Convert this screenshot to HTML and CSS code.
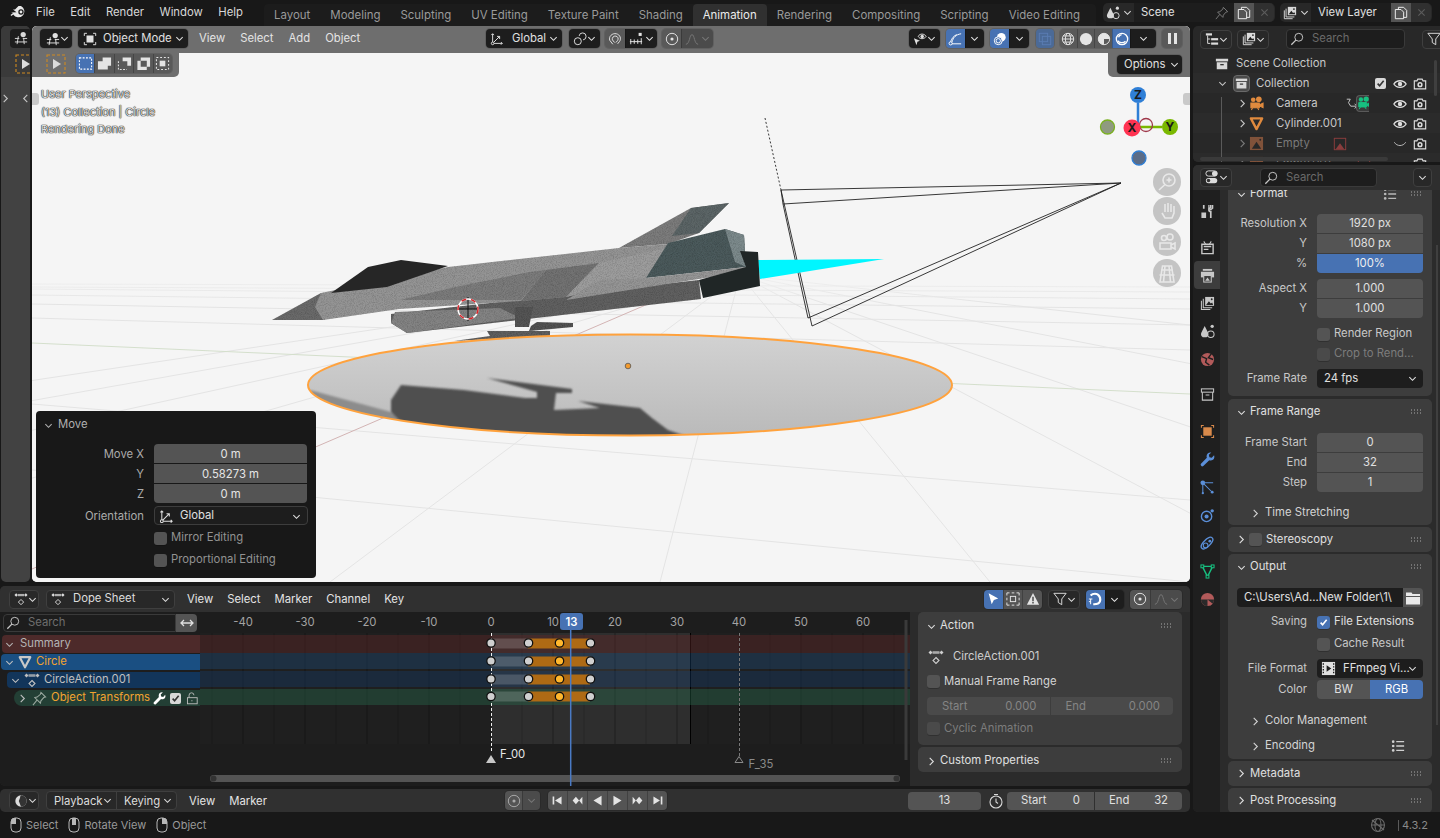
FILE: index.html
```html
<!DOCTYPE html>
<html lang="en">

<head>
  <meta charset="UTF-8" />
  <title>Blender 4.3.2</title>
  <link rel="stylesheet" href="styles.css">
</head>

<body>
  <!-- icon set -->
  <svg class="defs">
    <symbol id="i-logo" viewBox="0 0 18 16"><path d="M1 8.500l5.500-.2L3 5.500h2l3.500-3.500h2.500a6 6 0 1 1-7.800 8.500L1.500 12 .5 11 3 9z" fill="currentColor" stroke="none"/><circle cx="11" cy="8" r="2.700" fill="#181818" stroke="none"/><circle cx="11" cy="8" r="1.400" fill="currentColor" stroke="none"/></symbol>
    <symbol id="i-view3d" viewBox="0 0 16 16"><circle cx="10.500" cy="4" r="3" fill="currentColor" stroke="none"/><path d="M1 8.500h5M10 8.500h5M1 12.500h14M5 6l-1.500 9M11 8l.7 7"/></symbol>
    <symbol id="i-obj" viewBox="0 0 16 16"><path d="M1.500 4.500v-3h3M11.500 1.500h3v3M14.500 11.500v3h-3M4.500 14.500h-3v-3"/><rect x="4" y="4" width="8" height="8" fill="currentColor" stroke="none"/></symbol>
    <symbol id="i-down" viewBox="0 0 10 10"><path d="M1.500 3.500L5 7l3.500-3.500"/></symbol>
    <symbol id="i-right" viewBox="0 0 10 10"><path d="M3 1l4 4-4 4"/></symbol>
    <symbol id="i-orient" viewBox="0 0 16 16"><path d="M3 13V2M1.500 3.500L3 2l1.500 1.500M3 13h11M12.500 11.500L14 13l-1.500 1.500M3 13l8-8M8 5h3v3"/><circle cx="3" cy="13" r="1.500" fill="#1d1d1d"/></symbol>
    <symbol id="i-pivot" viewBox="0 0 16 16"><circle cx="5.500" cy="10.500" r="4"/><path d="M7 4.500A4 4 0 1 1 11.500 9"/></symbol>
    <symbol id="i-magnet" viewBox="0 0 16 16"><path d="M5.500 14L2 9.500C.5 5 5 1 9.500 2 14 3 15.500 8 13 11l-2 2.500M7.500 12L5 9c-.8-2.500 1.500-4.800 4-4.300 2.500.5 3.300 3 2 5l-2 2.300"/></symbol>
    <symbol id="i-inc" viewBox="0 0 16 16"><rect x="11" y="1" width="3.500" height="3.500" fill="currentColor" stroke="none"/><path d="M1 11h14M2 8v6M6 8.500v5M10 8.500v5M14 7v7"/></symbol>
    <symbol id="i-prop" viewBox="0 0 16 16"><circle cx="8" cy="8" r="6.500"/><circle cx="8" cy="8" r="1.800" fill="currentColor" stroke="none"/></symbol>
    <symbol id="i-curve" viewBox="0 0 16 16"><path d="M1 14c4.500 0 4-11 7-11s2.500 11 7 11"/></symbol>
    <symbol id="i-vis" viewBox="0 0 16 16"><path d="M6 5c1.500-3.500 7-3.500 9 0-2 3.500-7.500 3.500-9 0z"/><circle cx="10.500" cy="5" r="2" fill="currentColor" stroke="none"/><path d="M1 7l7 3-3 1-1 4z" fill="currentColor" stroke="none"/></symbol>
    <symbol id="i-gizmo" viewBox="0 0 16 16"><circle cx="3" cy="13" r="1.800"/><path d="M4.500 11.500C6 6 9 3 15 2M4.500 13.500H15M3 11c1-3.500 4-7 7-8"/></symbol>
    <symbol id="i-overlay" viewBox="0 0 16 16"><circle cx="9.500" cy="6" r="5" fill="currentColor" stroke="none"/><circle cx="6" cy="10" r="4.500" fill="#4772b3"/><circle cx="6" cy="10" r="2.500"/></symbol>
    <symbol id="i-xray" viewBox="0 0 16 16"><rect x="1.500" y="1.500" width="9.500" height="9.500"/><rect x="5" y="5" width="9.500" height="9.500"/></symbol>
    <symbol id="i-wire" viewBox="0 0 16 16"><circle cx="8" cy="8" r="6.500"/><ellipse cx="8" cy="8" rx="3" ry="6.500"/><path d="M1.500 8h13M2.500 4.500h11M2.500 11.500h11"/></symbol>
    <symbol id="i-solid" viewBox="0 0 16 16"><circle cx="8" cy="8" r="7" fill="currentColor" stroke="none"/></symbol>
    <symbol id="i-matcap" viewBox="0 0 16 16"><circle cx="8" cy="8" r="6.500"/><path d="M8 1.500A6.500 6.500 0 0 1 14.500 8H8v6.500A6.500 6.500 0 0 1 8 1.500z" fill="currentColor" stroke="none"/></symbol>
    <symbol id="i-render" viewBox="0 0 16 16"><circle cx="8" cy="8" r="6.500" stroke-width="1.500"/><path d="M3 10c2 2.500 6.500 3 9 .5M4 6c.5-1.500 2-2.800 3.500-3" stroke-width="1.500"/></symbol>
    <symbol id="i-search" viewBox="0 0 16 16"><circle cx="10" cy="6" r="4.500"/><path d="M6.700 9.300L1.500 14.500" stroke-width="1.500"/></symbol>
    <symbol id="i-filter" viewBox="0 0 16 16"><path d="M1 1.500h14L10 8v6.500L6 12V8z"/></symbol>
    <symbol id="i-outliner" viewBox="0 0 16 16"><rect x="1" y="1.500" width="7" height="2.500" fill="currentColor" stroke="none"/><path d="M3 4v9h3M3 8h3"/><rect x="7" y="7" width="8" height="2.500" fill="currentColor" stroke="none"/><rect x="7" y="12" width="8" height="2.500" fill="currentColor" stroke="none"/></symbol>
    <symbol id="i-layer" viewBox="0 0 16 16"><path d="M1.500 5v9.500H11M3.500 3v9.500H13"/><rect x="5.500" y="1" width="9.500" height="9.500" fill="currentColor" stroke="none"/><path d="M6.500 9.500l3-4 2 2.500 1.500-1 1 2.500z" fill="#222" stroke="none"/><circle cx="12.500" cy="3.500" r="1" fill="#222" stroke="none"/></symbol>
    <symbol id="i-scene" viewBox="0 0 16 16"><path d="M5 2l3.500 7a3.800 3.800 0 0 1-1.500 5H3a4 4 0 0 1-1.500-5z" fill="currentColor" stroke="none"/><circle cx="11.500" cy="11" r="3.500"/><circle cx="13" cy="2.500" r="1.800" fill="currentColor" stroke="none"/></symbol>
    <symbol id="i-pin" viewBox="0 0 16 16"><path d="M1 15l4.500-5.500M9.500 1.500l5 5-2 .5-3 3.500-.5 2.500-6-6 2.500-.5L9 3.500z"/></symbol>
    <symbol id="i-copy" viewBox="0 0 16 16"><path d="M5 4V1.500h6L14.500 5v8H11M1.500 4H8l3 3v7.500H1.500z"/></symbol>
    <symbol id="i-x" viewBox="0 0 10 10"><path d="M1.500 1.500l7 7M8.500 1.500l-7 7"/></symbol>
    <symbol id="i-box" viewBox="0 0 16 16"><rect x="1" y="2" width="14" height="3" fill="currentColor" stroke="none"/><path d="M2 6h12v8H2z" fill="currentColor" stroke="none"/><rect x="6" y="8" width="4" height="1.500" fill="#333" stroke="none"/></symbol>
    <symbol id="i-check" viewBox="0 0 10 10"><path d="M1.800 5.200L4 7.500 8.500 2" stroke-width="1.800"/></symbol>
    <symbol id="i-eye" viewBox="0 0 16 16"><path d="M1 8c3-5 11-5 14 0-3 5-11 5-14 0z" stroke-width="1.500"/><circle cx="8" cy="8" r="2.500" fill="currentColor" stroke="none"/></symbol>
    <symbol id="i-eyeoff" viewBox="0 0 16 16"><path d="M1.500 6c3 5 10 5 13 0"/></symbol>
    <symbol id="i-camera" viewBox="0 0 16 16"><path d="M1.500 4.500h3l1-2h5l1 2h3v9h-13z" stroke-width="1.300"/><circle cx="8" cy="8.800" r="3" fill="currentColor" stroke="none"/><circle cx="8" cy="8.800" r="1.300" fill="#282828" stroke="none"/></symbol>
    <symbol id="i-movie" viewBox="0 0 16 16"><circle cx="4.500" cy="4" r="2.500" fill="currentColor" stroke="none"/><circle cx="10.500" cy="3.500" r="3" fill="currentColor" stroke="none"/><path d="M2 7.500h9v5H2zM11 9.500l4-2v5l-4-2M4 12.500L2.500 15M9 12.500l1.500 2.500" fill="currentColor" stroke="currentColor"/></symbol>
    <symbol id="i-mesh" viewBox="0 0 16 16"><path d="M2 2.500h12L8 14z" stroke-width="2.500" stroke-linejoin="round"/></symbol>
    <symbol id="i-image" viewBox="0 0 16 16"><rect x="1" y="1" width="14" height="14" fill="currentColor" stroke="none"/><path d="M3 13.500L8 6l5 7.500z" fill="#282828" stroke="none"/><circle cx="12" cy="4" r="1" fill="#282828" stroke="none"/></symbol>
    <symbol id="i-imgline" viewBox="0 0 16 16"><rect x="1.500" y="1.500" width="13" height="13"/><path d="M3 14l5-7 5 7z" fill="currentColor" stroke="none"/></symbol>
    <symbol id="i-rel" viewBox="0 0 16 16"><path d="M2 2.500h4l-2 4 2.500 4H13M11 8l3 2.500-3 2.500"/></symbol>
    <symbol id="i-keys" viewBox="0 0 16 16"><path d="M2.500 1.500L4.500 3.500l-2 2-2-2zM13.500 1.500l2 2-2 2-2-2z" fill="currentColor" stroke="none"/><rect x="4.500" y="2.200" width="7" height="2.600" fill="currentColor" stroke="none" opacity=".75"/><path d="M8 8.500l3 3-3 3-3-3z"/></symbol>
    <symbol id="i-wrench" viewBox="0 0 16 16"><path d="M15 3.500l-2.500 2.500-2.500-.5-.5-2.500L12 .5C9.500 0 7 1.500 7 4.500c0 .7.100 1.200.3 1.600L1 12.500a1.800 1.800 0 0 0 2.500 2.500l6.400-6.300c.400.200.9.300 1.600.3 3 0 4.500-2.500 3.500-5.500z" fill="currentColor" stroke="none"/></symbol>
    <symbol id="i-lock" viewBox="0 0 16 16"><rect x="3" y="7" width="12" height="7.500"/><path d="M5 7V4a3 3 0 0 1 6 0M8.500 10v1.500"/></symbol>
    <symbol id="i-swap" viewBox="0 0 16 16"><path d="M2 8h12M5 5L2 8l3 3M11 5l3 3-3 3" stroke-width="1.300"/></symbol>
    <symbol id="i-arrow" viewBox="0 0 16 16"><path d="M3 1.500l11 6-5 1.500-2.500 5z" fill="currentColor" stroke="none"/></symbol>
    <symbol id="i-selbox" viewBox="0 0 16 16"><path d="M1 4V1h3M12 1h3v3M15 12v3h-3M4 15H1v-3M6.500 1h3M6.500 15h3M1 6.500v3M15 6.500v3"/><rect x="5" y="5" width="6" height="6"/></symbol>
    <symbol id="i-warn" viewBox="0 0 16 16"><path d="M8 1l7 13.500H1z" fill="currentColor" stroke="none"/><path d="M8 5.500v5M8 11.500v1.500" stroke="#545454" stroke-width="1.800"/></symbol>
    <symbol id="i-snapdope" viewBox="0 0 16 16"><path d="M6 14c2 0 6 .5 7.500-3 1.500-4-1-9-5.500-9-2 0-4 1-5 2" stroke-width="2.500"/><path d="M1 8h4M1 11h2M3 8v6"/></symbol>
    <symbol id="i-clock" viewBox="0 0 16 16"><circle cx="8" cy="8" r="6.500" fill="currentColor" stroke="none"/><path d="M8 1.500A6.500 6.500 0 0 1 14.500 8 6.500 6.500 0 0 1 8 14.500L5.500 8z" fill="#333" stroke="none"/><path d="M8 2v6l3 2" stroke="#333"/></symbol>
    <symbol id="i-stopwatch" viewBox="0 0 16 16"><circle cx="8" cy="9" r="6"/><path d="M8 5.500V9l2 1.500M6 1.500h4"/></symbol>
    <symbol id="i-mouse-l" viewBox="0 0 12 16"><rect x="1" y="1" width="10" height="14" rx="4"/><path d="M6 1H5a4 4 0 0 0-4 4v2h5z" fill="currentColor" stroke="none"/></symbol>
    <symbol id="i-mouse-m" viewBox="0 0 12 16"><rect x="1" y="1" width="10" height="14" rx="4"/><rect x="4" y="1" width="4" height="7" fill="currentColor" stroke="none"/></symbol>
    <symbol id="i-mouse-r" viewBox="0 0 12 16"><rect x="1" y="1" width="10" height="14" rx="4"/><path d="M6 1h1a4 4 0 0 1 4 4v2H6z" fill="currentColor" stroke="none"/></symbol>
    <symbol id="i-net" viewBox="0 0 16 16"><circle cx="8" cy="8" r="6.500"/><ellipse cx="8" cy="8" rx="3" ry="6.500"/><path d="M1.500 8h13M2 3l12 10"/></symbol>
    <symbol id="i-list" viewBox="0 0 16 16"><circle cx="2.500" cy="3" r="1.500" fill="currentColor" stroke="none"/><circle cx="2.500" cy="8" r="1.500" fill="currentColor" stroke="none"/><circle cx="2.500" cy="13" r="1.500" fill="currentColor" stroke="none"/><path d="M6 3h9M6 8h9M6 13h9" stroke-width="1.500"/></symbol>
    <symbol id="i-grip" viewBox="0 0 12 6"><path d="M1 1h.9M4 1h.9M7 1h.9M10 1h.9M1 4h.9M4 4h.9M7 4h.9M10 4h.9" stroke-width="1.300"/></symbol>
    <symbol id="i-folder" viewBox="0 0 16 16"><path d="M1 2.500h5.500l1 1.500H15v2H1z M1 7h14v7.500H1z" fill="currentColor" stroke="none"/></symbol>
    <symbol id="i-film" viewBox="0 0 16 16"><rect x="1" y="1" width="14" height="14" fill="currentColor" stroke="none"/><path d="M6 4.500l5 3.500-5 3.500z" fill="#1d1d1d" stroke="none"/><path d="M2.500 2.500v11M13.500 2.500v11" stroke="#1d1d1d" stroke-dasharray="1.500 1.500" stroke-width="1.400"/></symbol>
    <symbol id="i-props" viewBox="0 0 16 16"><rect x="1" y="1" width="13" height="6" rx="3"/><circle cx="11" cy="4" r="3" fill="currentColor" stroke="none"/><rect x="1" y="9" width="13" height="6" rx="3" fill="currentColor" stroke="none"/><circle cx="4" cy="12" r="2" fill="#333" stroke="none"/></symbol>
    <symbol id="i-tool" viewBox="0 0 16 16"><path d="M4 1v4M11.500 1v3a2 2 0 0 0 0 4v7" stroke-width="1.800"/><path d="M1.500 9h5v6h-5z" fill="currentColor" stroke="none"/><path d="M9.500 1v3.500l2 1.500 2-1.500V1" stroke-width="1.400"/></symbol>
    <symbol id="i-trender" viewBox="0 0 16 16"><path d="M2 4.500h12v10H2z" stroke-width="1.500"/><path d="M4 1.500l2 3M12 1.500l-2 3"/><path d="M4 7h8M4 10h5" stroke-width="1.500"/></symbol>
    <symbol id="i-toutput" viewBox="0 0 16 16"><rect x="1" y="4" width="14" height="6" fill="currentColor" stroke="none"/><rect x="3" y="1" width="10" height="2" fill="currentColor" stroke="none"/><rect x="4" y="8" width="8" height="7" fill="#3d3d3d" stroke="currentColor"/><path d="M5.500 13.500L8 10l2.500 3.500z" fill="currentColor" stroke="none"/></symbol>
    <symbol id="i-world" viewBox="0 0 16 16"><circle cx="8" cy="8" r="7" fill="currentColor" stroke="none"/><path d="M2 5l5 2-1 4 4 3M12 2L9 6l5 2" stroke="#1f1f1f" stroke-width="1.500"/></symbol>
    <symbol id="i-coll" viewBox="0 0 16 16"><rect x="1.500" y="2" width="13" height="3.500"/><path d="M2.500 5.500V14h11V5.500M6 8.500h4" /></symbol>
    <symbol id="i-tobject" viewBox="0 0 16 16"><path d="M1.500 4v-2.500H4M12 1.500h2.500V4M14.500 12v2.500H12M4 14.500H1.500V12"/><rect x="3.500" y="3.500" width="9" height="9" fill="currentColor" stroke="none"/></symbol>
    <symbol id="i-particles" viewBox="0 0 16 16"><circle cx="3" cy="3" r="2.500" fill="currentColor" stroke="none"/><path d="M3 3v11M3 3l9 9M5 3h9"/><circle cx="3" cy="14" r="1.200" fill="currentColor" stroke="none"/><circle cx="13" cy="13" r="1.500" fill="currentColor" stroke="none"/></symbol>
    <symbol id="i-physics" viewBox="0 0 16 16"><circle cx="7" cy="9" r="5.500" stroke-width="1.500"/><circle cx="7" cy="9" r="2.200" fill="currentColor" stroke="none"/><circle cx="13" cy="3" r="1.800" fill="currentColor" stroke="none"/></symbol>
    <symbol id="i-constraint" viewBox="0 0 16 16"><path d="M2 13c-2-2 0-5 3-8s6-5 8-3 0 5-3 8-6 5-8 3z" stroke-width="1.500"/><circle cx="6" cy="10" r="2.500"/><circle cx="10.500" cy="5.500" r="1.500" fill="currentColor" stroke="none"/></symbol>
    <symbol id="i-data" viewBox="0 0 16 16"><path d="M2.500 2.500h11L8 13.500z" stroke-width="1.500"/><rect x="1" y="1" width="3" height="3" fill="#1f1f1f"/><rect x="12" y="1" width="3" height="3" fill="#1f1f1f"/><rect x="6.500" y="12" width="3" height="3" fill="#1f1f1f"/></symbol>
    <symbol id="i-material" viewBox="0 0 16 16"><circle cx="8" cy="8" r="7" fill="currentColor" stroke="none"/><path d="M8 1v7H1a7 7 0 0 0 7 7 7 7 0 0 0 7-7H8" fill="#2a2a2a" stroke="none"/><path d="M8 8l5.500 4.500A7 7 0 0 1 8 15z" fill="currentColor" stroke="none"/></symbol>
    <symbol id="i-jump-s" viewBox="0 0 16 16"><path d="M3 3v10" stroke-width="2"/><path d="M13 3v10L5 8z" fill="currentColor" stroke="none"/></symbol>
    <symbol id="i-jump-e" viewBox="0 0 16 16"><path d="M13 3v10" stroke-width="2"/><path d="M3 3v10l8-5z" fill="currentColor" stroke="none"/></symbol>
    <symbol id="i-key-p" viewBox="0 0 16 16"><path d="M10 8l4-4.500V13zM10 8L6 3.500 2 8l4 4.500z" fill="currentColor" stroke="none"/></symbol>
    <symbol id="i-key-n" viewBox="0 0 16 16"><path d="M6 8L2 3.500V13zM6 8l4-4.500L14 8l-4 4.500z" fill="currentColor" stroke="none"/></symbol>
    <symbol id="i-play-r" viewBox="0 0 16 16"><path d="M13 2v12L3 8z" fill="currentColor" stroke="none"/></symbol>
    <symbol id="i-play" viewBox="0 0 16 16"><path d="M3 2v12l10-6z" fill="currentColor" stroke="none"/></symbol>
    <symbol id="i-sel-set" viewBox="0 0 16 16"><rect x="1.500" y="2" width="13" height="12" fill="none" stroke-dasharray="2 1.500"/></symbol>
    <symbol id="i-sel-ext" viewBox="0 0 16 16"><path d="M6 1.500h9v9h-3.500v4H1v-9h5z" fill="currentColor" stroke="none"/></symbol>
    <symbol id="i-sel-sub" viewBox="0 0 16 16"><path d="M1.500 5.500v9h9" stroke-dasharray="2 1.500"/><path d="M6 1.500h9v9h-4V5.500H6z" fill="currentColor" stroke="none"/></symbol>
    <symbol id="i-sel-xor" viewBox="0 0 16 16"><path d="M5 5V1.500h10v10h-3.500V5zM1.500 5H5v6.500h6.500V15H1.500z" fill="currentColor" stroke="none"/></symbol>
    <symbol id="i-sel-and" viewBox="0 0 16 16"><path d="M1.500 1.500h13v13h-13z" stroke-dasharray="2 2"/><rect x="5" y="5" width="6" height="6" fill="currentColor" stroke="none"/></symbol>
    <symbol id="i-tool-sel" viewBox="0 0 20 20"><rect x="1" y="1" width="18" height="18" stroke="#d08a20" stroke-dasharray="3 2"/><path d="M7 5l8 5-8 5z" fill="currentColor" stroke="none"/></symbol>
  </svg>

  <header class="topbar">
    <svg class="ic logo"><use href="#i-logo" /></svg>
    <nav class="topmenu">
      <span>File</span><span>Edit</span><span>Render</span><span>Window</span><span>Help</span>
    </nav>
    <nav class="workspaces">
      <span>Layout</span><span>Modeling</span><span>Sculpting</span><span>UV Editing</span><span>Texture Paint</span><span>Shading</span>
      <span class="active">Animation</span><span>Rendering</span><span>Compositing</span><span>Scripting</span><span>Video Editing</span>
    </nav>
    <div class="scene-sel">
      <div class="sel-type"><svg class="ic"><use href="#i-scene" /></svg><svg class="chev"><use href="#i-down" /></svg></div>
      <div class="sel-name scene-name">Scene<svg class="ic pin"><use href="#i-pin" /></svg></div>
      <div class="sel-copy"><svg class="ic"><use href="#i-copy" /></svg></div>
      <div class="sel-x"><svg class="chev"><use href="#i-x" /></svg></div>
    </div>
    <div class="scene-sel layer-sel">
      <div class="sel-type"><svg class="ic"><use href="#i-layer" /></svg><svg class="chev"><use href="#i-down" /></svg></div>
      <div class="sel-name layer-name">View Layer</div>
      <div class="sel-copy"><svg class="ic"><use href="#i-copy" /></svg></div>
      <div class="sel-x"><svg class="chev"><use href="#i-x" /></svg></div>
    </div>
  </header>

  <div class="workspace">
    <div class="left-col">
      <div class="view-row">
        <aside class="strip">
          <div class="strip-head"><div class="strip-btn"><svg class="ic"><use href="#i-view3d" /></svg></div></div>
          <div class="strip-tool"><svg class="ic tool-ic"><use href="#i-tool-sel" /></svg></div>
          <div class="strip-arrows"><svg class="chev"><use href="#i-right" /></svg><svg class="chev flip"><use href="#i-right" /></svg></div>
        </aside>

        <main class="viewport">
          <!-- 3D scene, coordinates are window pixels -->
          <svg class="scene" viewBox="32 26 1158 556">
            <defs>
              <linearGradient id="disk-fill" x1="0" y1="0" x2="0" y2="1">
                <stop offset="0" stop-color="#d2d2d2" />
                <stop offset="1" stop-color="#bababa" />
              </linearGradient>
              <linearGradient id="floor-fade" x1="0" y1="0" x2="0" y2="1">
                <stop offset="0" stop-color="#f5f5f5" />
                <stop offset="1" stop-color="#f5f5f5" stop-opacity="0" />
              </linearGradient>
              <clipPath id="disk-clip"><ellipse cx="630" cy="385" rx="322" ry="50.500" /></clipPath>
              <filter id="soft"><feGaussianBlur stdDeviation="1.200" /></filter>
              <filter id="grain" x="0" y="0" width="100%" height="100%">
                <feTurbulence type="fractalNoise" baseFrequency="1.100" numOctaves="2" seed="4" result="n" />
                <feColorMatrix in="n" type="matrix" values="0 0 0 0 0  0 0 0 0 0  0 0 0 0 0  0 0 0 .7 -.27" result="dots" />
                <feComposite in="dots" in2="SourceAlpha" operator="in" result="speck" />
                <feMerge><feMergeNode in="SourceGraphic" /><feMergeNode in="speck" /></feMerge>
              </filter>
            </defs>
            <rect x="32" y="26" width="1158" height="556" fill="#f5f5f5" />
            <g class="grid-lines">
              <!-- lines running to the far left vanishing point -->
              <path d="M32 284L1190 287M32 287L1190 292M32 289L1190 299M32 295L1190 309M32 304L1190 325M32 318L1190 350M32 404L1190 500M32 470L1190 582" />
              <!-- lines running to the vanishing point behind the ship -->
              <path d="M740 275L-1320 582M740 275L-990 582M740 275L-660 582M740 275L-330 582M740 275L330 582M740 275L660 582M740 275L990 582M740 275L1320 582M740 275L1650 582M740 275L2300 582M740 275L3500 582" />
              <path class="axis-g" d="M32 343L1190 394" />
              <path class="axis-r" d="M32 569L720 273" />
            </g>
            <rect x="32" y="265" width="1158" height="40" fill="url(#floor-fade)" />

            <!-- camera -->
            <g class="wire">
              <path d="M765 118L781 190" stroke-dasharray="2 2" />
              <path d="M781 190L1121 183L783 204M781 190L812 326L1121 183L808 318M781 190L783 204L808 318" />
            </g>

            <!-- ship -->
            <polygon points="758,260 884,259 760,279" fill="#00f6ff" />
            <g filter="url(#grain)">
              <polygon points="619,248 691,208 729,203 699,233 668,244" fill="#7c7c7c" />
              <polygon points="691,208 729,203 699,233 672,236" fill="#5b6566" />
              <polygon points="272,320 321,293 325,320" fill="#6a6a6a" />
              <polygon points="391,314 699,280 701,299 407,333 391,323" fill="#606060" />
              <polygon points="391,323 407,333 520,318 500,308 395,312" fill="#838383" />
              <polygon points="321,293 448,267 619,248 668,244 646,278 566,297 521,301 399,309 323,320 315,307" fill="#949494" />
              <polygon points="400,300 460,286 530,272 546,270 521,300" fill="#7c7c7c" />
              <polygon points="546,270 599,263 566,297 521,301" fill="#727272" />
              <polygon points="599,263 668,248 646,278 566,297" fill="#9c9c9c" />
              <polygon points="668,243 725,229 744,235 746,267 646,278" fill="#4c5a5c" />
              <polygon points="725,229 744,235 746,267 735,262" fill="#7c898b" />
              <polygon points="646,278 746,267 743,272 566,300 600,280" fill="#959595" />
              <polygon points="515,307 533,307 529,327 515,327" fill="#555" />
              <polygon points="537,322 573,323 573,327 529,331 531,326" fill="#525252" />
              <polygon points="454,341 490,336 487,331 550,331 550,336" fill="#5f5f5f" />
            </g>
            <polygon points="331,293 368,267 401,260 448,266 387,287" fill="#262626" />
            <polygon points="740,251 758,252 760,286 703,298 699,280 746,267" fill="#202626" />

            <!-- 3D cursor -->
            <g class="cursor3d">
              <path d="M458 309H478M468 297V321" stroke="#111" stroke-width="1" />
              <circle cx="468" cy="309" r="10" fill="none" stroke="#fff" stroke-width="1.500" />
              <circle cx="468" cy="309" r="10" fill="none" stroke="#d8262c" stroke-width="1.500" stroke-dasharray="5 5" />
            </g>

            <!-- disk -->
            <ellipse cx="630" cy="385" rx="322" ry="50.500" fill="url(#disk-fill)" />
            <g clip-path="url(#disk-clip)">
              <path filter="url(#soft)" d="M310 390L391 412L460 440H300z" fill="#8c8c8c" />
              <path filter="url(#soft)" d="M391 412L391 400L401 385L464 390L525 398L537 398L537 392L487 378L572 389L572 393L556 393L554 410L600 408L578 401L640 408L652 418L668 430L697 440H420z" fill="#505050" />
            </g>
            <ellipse cx="630" cy="385" rx="322" ry="50.500" fill="none" stroke="#ffa23d" stroke-width="2" />
            <circle cx="628" cy="366" r="2.800" fill="#f29a2e" stroke="#555" stroke-width=".8" />
          </svg>

          <div class="view-head">
            <div class="hbtn b-type"><svg class="ic"><use href="#i-view3d" /></svg><svg class="chev"><use href="#i-down" /></svg></div>
            <div class="hbtn b-mode"><svg class="ic"><use href="#i-obj" /></svg><span class="grow">Object Mode</span><svg class="chev"><use href="#i-down" /></svg></div>
            <div class="menus view-menus"><span class="menu">View</span><span class="menu">Select</span><span class="menu">Add</span><span class="menu">Object</span></div>
            <div class="hbtn b-global"><svg class="ic"><use href="#i-orient" /></svg><span class="grow">Global</span><svg class="chev"><use href="#i-down" /></svg></div>
            <div class="hbtn b-pivot"><svg class="ic"><use href="#i-pivot" /></svg><svg class="chev"><use href="#i-down" /></svg></div>
            <div class="hgroup b-snap"><div class="gcell on-grey"><svg class="ic"><use href="#i-magnet" /></svg></div><div class="gcell dark wide"><svg class="ic"><use href="#i-inc" /></svg><svg class="chev"><use href="#i-down" /></svg></div></div>
            <div class="hgroup b-prop"><div class="gcell on-grey"><svg class="ic"><use href="#i-prop" /></svg></div><div class="gcell dim wide"><svg class="ic"><use href="#i-curve" /></svg><svg class="chev"><use href="#i-down" /></svg></div></div>
            <div class="hbtn b-vis"><svg class="ic"><use href="#i-vis" /></svg><svg class="chev"><use href="#i-down" /></svg></div>
            <div class="hgroup b-gizmo"><div class="gcell blue"><svg class="ic"><use href="#i-gizmo" /></svg></div><div class="gcell dark"><svg class="chev"><use href="#i-down" /></svg></div></div>
            <div class="hgroup b-overlay"><div class="gcell blue"><svg class="ic"><use href="#i-overlay" /></svg></div><div class="gcell dark"><svg class="chev"><use href="#i-down" /></svg></div></div>
            <div class="hgroup b-xray"><div class="gcell blue-dim"><svg class="ic"><use href="#i-xray" /></svg></div></div>
            <div class="hgroup b-shade">
              <div class="gcell on-grey"><svg class="ic"><use href="#i-wire" /></svg></div>
              <div class="gcell on-grey"><svg class="ic"><use href="#i-solid" /></svg></div>
              <div class="gcell on-grey"><svg class="ic"><use href="#i-matcap" /></svg></div>
              <div class="gcell blue"><svg class="ic"><use href="#i-render" /></svg></div>
              <div class="gcell dark"><svg class="chev"><use href="#i-down" /></svg></div>
            </div>
            <div class="hgroup b-pause"><div class="gcell on-grey pause"><i></i><i></i></div></div>
          </div>

          <div class="view-sub">
            <div class="tool-set">
              <svg class="ic tool-ic"><use href="#i-tool-sel" /></svg>
              <div class="hgroup b-selmode">
                <div class="gcell blue"><svg class="ic"><use href="#i-sel-set" /></svg></div>
                <div class="gcell on-grey"><svg class="ic"><use href="#i-sel-ext" /></svg></div>
                <div class="gcell on-grey"><svg class="ic"><use href="#i-sel-sub" /></svg></div>
                <div class="gcell on-grey"><svg class="ic"><use href="#i-sel-xor" /></svg></div>
                <div class="gcell on-grey"><svg class="ic"><use href="#i-sel-and" /></svg></div>
              </div>
            </div>
            <div class="options-tab"><div class="hbtn b-options"><span class="grow">Options</span><svg class="chev"><use href="#i-down" /></svg></div></div>
          </div>

          <div class="view-text">
            <div>User Perspective</div>
            <div>(13) Collection | Circle</div>
            <div>Rendering Done</div>
          </div>
          <i class="edge-tab edge-l"></i>
          <i class="edge-tab edge-r"></i>

          <!-- navigation gizmo -->
          <svg class="nav-gizmo" viewBox="1090 80 100 210">
            <path d="M1138 103V128" stroke="#2f7fd6" stroke-width="2.500" />
            <path d="M1138 127H1162" stroke="#7ab800" stroke-width="2.500" />
            <circle cx="1146" cy="125" r="6.500" fill="none" stroke="#a03a4c" stroke-width="1.300" />
            <circle cx="1138" cy="95" r="8" fill="#2f7fd6" />
            <circle cx="1170" cy="127" r="8" fill="#7ab800" />
            <circle cx="1132" cy="128" r="8.500" fill="#ff3352" />
            <circle cx="1107.500" cy="127" r="7" fill="#8f9a80" stroke="#7ab020" stroke-width="1.300" />
            <circle cx="1139" cy="158" r="7" fill="#5a6c88" stroke="#2f7fd6" stroke-width="1.300" />
            <text x="1138" y="99" class="giz-label">Z</text>
            <text x="1132" y="132" class="giz-label">X</text>
            <text x="1170" y="131" class="giz-label">Y</text>
            <g class="nav-btn" fill="#c4c4c4">
              <circle cx="1167" cy="182" r="14" />
              <circle cx="1167" cy="211" r="14" />
              <circle cx="1167" cy="242" r="14" />
              <circle cx="1167" cy="273" r="14" />
            </g>
            <g fill="none" stroke="#e8e8e8" stroke-width="1.600">
              <circle cx="1169" cy="180" r="6" /><path d="M1165 184.500L1159 190M1169 177.500v5M1166.500 180h5" />
              <path d="M1162 213l3 5h7l2-5v-7M1165 212v-8M1168 212v-9M1171 212v-8" />
              <circle cx="1164" cy="238" r="2.500" /><circle cx="1170" cy="237" r="3" /><path d="M1160 243h11v6h-11zM1171 245l4-2v6l-4-2" />
              <path d="M1160 282l2.500-16h9l2.500 16zM1159.500 275h15M1161 270h12M1165 266l-1.500 16M1169 266l1.500 16" />
            </g>
          </svg>

          <section class="redo-panel">
            <div class="redo-head"><svg class="chev"><use href="#i-down" /></svg>Move</div>
            <div class="redo-row"><label>Move X</label><div class="redo-fld f-top">0 m</div></div>
            <div class="redo-row"><label>Y</label><div class="redo-fld">0.58273 m</div></div>
            <div class="redo-row"><label>Z</label><div class="redo-fld f-bot">0 m</div></div>
            <div class="redo-row r-orient"><label>Orientation</label><div class="redo-drop"><svg class="ic"><use href="#i-orient" /></svg><span class="grow">Global</span><svg class="chev"><use href="#i-down" /></svg></div></div>
            <div class="redo-row r-check"><label></label><span class="cb"></span>Mirror Editing</div>
            <div class="redo-row r-check r-last"><label></label><span class="cb"></span>Proportional Editing</div>
          </section>
        </main>
      </div>

      <section class="dope">
        <div class="ed-head">
          <div class="dbtn d-type"><svg class="ic"><use href="#i-keys" /></svg><svg class="chev"><use href="#i-down" /></svg></div>
          <div class="dbtn d-mode"><svg class="ic"><use href="#i-keys" /></svg><span class="grow">Dope Sheet</span><svg class="chev"><use href="#i-down" /></svg></div>
          <div class="menus dope-menus"><span class="menu">View</span><span class="menu">Select</span><span class="menu">Marker</span><span class="menu">Channel</span><span class="menu">Key</span></div>
          <div class="hgroup d-sel">
            <div class="gcell blue"><svg class="ic"><use href="#i-arrow" /></svg></div>
            <div class="gcell"><svg class="ic"><use href="#i-selbox" /></svg></div>
            <div class="gcell"><svg class="ic"><use href="#i-warn" /></svg></div>
          </div>
          <div class="dbtn d-filter"><svg class="ic"><use href="#i-filter" /></svg><svg class="chev"><use href="#i-down" /></svg></div>
          <div class="hgroup d-snap"><div class="gcell blue"><svg class="ic"><use href="#i-snapdope" /></svg></div><div class="gcell dark"><svg class="chev"><use href="#i-down" /></svg></div></div>
          <div class="hgroup d-prop"><div class="gcell"><svg class="ic"><use href="#i-prop" /></svg></div><div class="gcell dim wide"><svg class="ic"><use href="#i-curve" /></svg><svg class="chev"><use href="#i-down" /></svg></div></div>
        </div>

        <div class="dope-body">
          <div class="channels">
            <div class="ch-search">
              <div class="ch-field"><svg class="ic"><use href="#i-search" /></svg>Search</div>
              <div class="ch-swap"><svg class="ic"><use href="#i-swap" /></svg></div>
            </div>
            <div class="ch ch-summary"><svg class="chev"><use href="#i-down" /></svg>Summary</div>
            <div class="ch ch-object"><svg class="chev"><use href="#i-down" /></svg><svg class="ic ic-mesh"><use href="#i-mesh" /></svg><span class="sel-name-text">Circle</span></div>
            <div class="ch ch-action"><svg class="chev"><use href="#i-down" /></svg><svg class="ic"><use href="#i-keys" /></svg>CircleAction.001</div>
            <div class="ch ch-group">
              <svg class="chev"><use href="#i-right" /></svg><svg class="ic ic-dim"><use href="#i-pin" /></svg><span class="sel-name-text grow">Object Transforms</span>
              <svg class="ic ic-small ic-white"><use href="#i-wrench" /></svg><span class="mini-check"><svg class="chev"><use href="#i-check" /></svg></span><svg class="ic ic-small"><use href="#i-lock" /></svg>
            </div>
          </div>

          <svg class="keys" viewBox="200 612 710 174">
            <rect x="200" y="612" width="710" height="174" fill="#1d1d1d" />
            <rect x="200" y="633" width="710" height="111" fill="#1f1f1f" />
            <rect x="491" y="633" width="199" height="111" fill="#2e2e2e" />
            <path class="grid-minor" d="M212 633V744M274 633V744M336 633V744M398 633V744M460 633V744M522 633V744M584 633V744M646 633V744M708 633V744M770 633V744M832 633V744M894 633V744" />
            <path class="grid-major" d="M243 633V744M305 633V744M367 633V744M429 633V744M491 633V744M553 633V744M615 633V744M677 633V744M739 633V744M801 633V744M863 633V744" />
            <path d="M690.500 633V744" stroke="#000" fill="none" />
            <rect x="200" y="635" width="710" height="18" fill="#642828" fill-opacity=".4" />
            <rect x="200" y="653" width="710" height="16" fill="#1e5a96" fill-opacity=".3" />
            <rect x="200" y="671" width="710" height="16" fill="#144682" fill-opacity=".3" />
            <rect x="200" y="689" width="710" height="16" fill="#286e50" fill-opacity=".38" />
            <g class="holds">
              <path d="M491 643.500H528M491 661.500H528M491 679.500H528M491 696.500H528" stroke="#fff" stroke-opacity=".17" stroke-width="10" />
              <path d="M528 643.500H590M528 661.500H590M528 679.500H590M528 696.500H590" stroke="#ae6a14" stroke-width="10" />
            </g>
            <g class="marker-line">
              <path d="M491.500 633V752" stroke="#eee" stroke-dasharray="3 2" />
              <path d="M739.500 633V757" stroke="#777" stroke-dasharray="3 2" />
            </g>
            <g class="kf">
              <circle cx="491" cy="643" r="4.200" /><circle cx="528.500" cy="643" r="4.200" /><circle class="kf-on" cx="559.500" cy="643" r="4.200" /><circle cx="590.500" cy="643" r="4.200" />
              <circle cx="491" cy="661" r="4.200" /><circle cx="528.500" cy="661" r="4.200" /><circle class="kf-on" cx="559.500" cy="661" r="4.200" /><circle cx="590.500" cy="661" r="4.200" />
              <circle cx="491" cy="679" r="4.200" /><circle cx="528.500" cy="679" r="4.200" /><circle class="kf-on" cx="559.500" cy="679" r="4.200" /><circle cx="590.500" cy="679" r="4.200" />
              <circle cx="491" cy="696.500" r="4.200" /><circle cx="528.500" cy="696.500" r="4.200" /><circle class="kf-on" cx="559.500" cy="696.500" r="4.200" /><circle cx="590.500" cy="696.500" r="4.200" />
            </g>
            <g class="ruler">
              <text x="243" y="626">-40</text><text x="305" y="626">-30</text><text x="367" y="626">-20</text><text x="429" y="626">-10</text>
              <text x="491" y="626">0</text><text x="553" y="626">10</text><text x="615" y="626">20</text><text x="677" y="626">30</text>
              <text x="739" y="626">40</text><text x="801" y="626">50</text><text x="863" y="626">60</text>
            </g>
            <polygon points="491,755 496,763 486,763" fill="#c8c8c8" />
            <polygon points="739,756.500 743,762.500 735,762.500" fill="none" stroke="#8a8a8a" />
            <text class="marker-on" x="500" y="758">F_00</text>
            <text class="marker-off" x="748.500" y="768">F_35</text>
            <path d="M906 620V760" stroke="#3a3a3a" stroke-width="3" />
            <rect x="210" y="775" width="690" height="7" rx="3.500" fill="#545454" />
            <circle cx="213.500" cy="778.500" r="3" fill="#333" />
            <circle cx="896.500" cy="778.500" r="3" fill="#333" />
            <path d="M570.700 630V786" stroke="#4a7ac4" stroke-width="1.500" />
            <rect x="560" y="613" width="23" height="17" rx="3" fill="#4772b3" />
            <text class="cur-frame" x="571.500" y="626">13</text>
          </svg>

          <aside class="ds-side">
            <div class="panel action-panel">
              <div class="phead"><svg class="chev"><use href="#i-down" /></svg><span class="grow">Action</span><svg class="grip"><use href="#i-grip" /></svg></div>
              <div class="act-name"><svg class="ic"><use href="#i-keys" /></svg>CircleAction.001</div>
              <div class="act-check"><span class="cb"></span>Manual Frame Range</div>
              <div class="act-range">
                <div class="act-cell"><span>Start</span><span>0.000</span></div>
                <div class="act-cell"><span>End</span><span>0.000</span></div>
              </div>
              <div class="act-check act-dim"><span class="cb"></span>Cyclic Animation</div>
            </div>
            <div class="panel closed-panel">
              <div class="phead"><svg class="chev"><use href="#i-right" /></svg><span class="grow">Custom Properties</span><svg class="grip"><use href="#i-grip" /></svg></div>
            </div>
          </aside>
        </div>
      </section>

      <section class="timeline">
        <div class="dbtn d-type"><svg class="ic"><use href="#i-clock" /></svg><svg class="chev"><use href="#i-down" /></svg></div>
        <div class="tl-pop">
          <div class="tl-pop-cell c-play">Playback<svg class="chev"><use href="#i-down" /></svg></div>
          <div class="tl-pop-cell c-key">Keying<svg class="chev"><use href="#i-down" /></svg></div>
        </div>
        <div class="menus tl-menus"><span class="menu">View</span><span class="menu">Marker</span></div>
        <div class="hgroup t-rec"><div class="gcell"><svg class="ic"><use href="#i-prop" /></svg></div><div class="gcell dim"><svg class="chev"><use href="#i-down" /></svg></div></div>
        <div class="hgroup t-trans">
          <div class="gcell"><svg class="ic"><use href="#i-jump-s" /></svg></div>
          <div class="gcell"><svg class="ic"><use href="#i-key-p" /></svg></div>
          <div class="gcell"><svg class="ic"><use href="#i-play-r" /></svg></div>
          <div class="gcell"><svg class="ic"><use href="#i-play" /></svg></div>
          <div class="gcell"><svg class="ic"><use href="#i-key-n" /></svg></div>
          <div class="gcell"><svg class="ic"><use href="#i-jump-e" /></svg></div>
        </div>
        <div class="t-frame">13</div>
        <div class="t-watch"><svg class="ic"><use href="#i-stopwatch" /></svg></div>
        <div class="t-range">
          <div class="t-cell"><span>Start</span><span>0</span></div>
          <div class="t-cell"><span>End</span><span>32</span></div>
        </div>
      </section>
    </div>

    <div class="right-col">
      <section class="outliner">
        <div class="out-head">
          <div class="dbtn o-type"><svg class="ic"><use href="#i-outliner" /></svg><svg class="chev"><use href="#i-down" /></svg></div>
          <div class="dbtn o-mode"><svg class="ic"><use href="#i-layer" /></svg><svg class="chev"><use href="#i-down" /></svg></div>
          <div class="search o-search"><svg class="ic"><use href="#i-search" /></svg>Search</div>
          <div class="dbtn o-filter"><svg class="ic"><use href="#i-filter" /></svg></div>
        </div>
        <div class="out-rows">
          <i class="tree-line"></i>
          <div class="orow o-l0"><svg class="ic ic-box"><use href="#i-box" /></svg><span class="grow">Scene Collection</span></div>
          <div class="orow odd o-l1"><svg class="chev"><use href="#i-down" /></svg><span class="coll-chip"><svg class="ic"><use href="#i-box" /></svg></span><span class="grow">Collection</span><span class="mini-check"><svg class="chev"><use href="#i-check" /></svg></span><svg class="ic rest"><use href="#i-eye" /></svg><svg class="ic rest"><use href="#i-camera" /></svg></div>
          <div class="orow o-l2"><svg class="chev"><use href="#i-right" /></svg><svg class="ic c-orange"><use href="#i-movie" /></svg><span class="grow">Camera</span><svg class="ic rel"><use href="#i-rel" /></svg><span class="cam-chip"><svg class="ic"><use href="#i-movie" /></svg></span><svg class="ic rest"><use href="#i-eye" /></svg><svg class="ic rest"><use href="#i-camera" /></svg></div>
          <div class="orow odd o-l2"><svg class="chev"><use href="#i-right" /></svg><svg class="ic c-orange"><use href="#i-mesh" /></svg><span class="grow">Cylinder.001</span><svg class="ic rest"><use href="#i-eye" /></svg><svg class="ic rest"><use href="#i-camera" /></svg></div>
          <div class="orow o-l2 faded"><svg class="chev"><use href="#i-right" /></svg><svg class="ic c-brown"><use href="#i-image" /></svg><span class="e-name">Empty</span><svg class="ic c-red"><use href="#i-imgline" /></svg><span class="grow"></span><svg class="ic rest"><use href="#i-eyeoff" /></svg><svg class="ic rest norm"><use href="#i-camera" /></svg></div>
          <div class="orow odd o-l2 faded"><svg class="chev"><use href="#i-right" /></svg><svg class="ic c-brown"><use href="#i-image" /></svg><span class="e-name e-wide">Empty.001</span><svg class="ic c-red"><use href="#i-imgline" /></svg><span class="grow"></span><svg class="ic rest"><use href="#i-eyeoff" /></svg><svg class="ic rest norm"><use href="#i-camera" /></svg></div>
          <i class="out-hbar"></i>
          <i class="out-vbar"></i>
        </div>
      </section>

      <section class="props">
        <div class="props-head">
          <div class="dbtn o-type"><svg class="ic"><use href="#i-props" /></svg><svg class="chev"><use href="#i-down" /></svg></div>
          <div class="search p-search"><svg class="ic"><use href="#i-search" /></svg>Search</div>
          <div class="dbtn p-drop"><svg class="chev"><use href="#i-down" /></svg></div>
        </div>
        <div class="props-body">
          <nav class="tabs">
            <div class="tab t-tool"><svg class="ic"><use href="#i-tool" /></svg></div>
            <div class="tab gap-8"><svg class="ic"><use href="#i-trender" /></svg></div>
            <div class="tab active"><svg class="ic"><use href="#i-toutput" /></svg></div>
            <div class="tab"><svg class="ic"><use href="#i-layer" /></svg></div>
            <div class="tab"><svg class="ic"><use href="#i-scene" /></svg></div>
            <div class="tab tc-world"><svg class="ic"><use href="#i-world" /></svg></div>
            <div class="tab gap-7"><svg class="ic"><use href="#i-coll" /></svg></div>
            <div class="tab gap-9 tc-orange"><svg class="ic"><use href="#i-tobject" /></svg></div>
            <div class="tab tc-blue"><svg class="ic"><use href="#i-wrench" /></svg></div>
            <div class="tab tc-blue"><svg class="ic"><use href="#i-particles" /></svg></div>
            <div class="tab tc-blue"><svg class="ic"><use href="#i-physics" /></svg></div>
            <div class="tab tc-blue"><svg class="ic"><use href="#i-constraint" /></svg></div>
            <div class="tab tc-green"><svg class="ic"><use href="#i-data" /></svg></div>
            <div class="tab tc-world"><svg class="ic"><use href="#i-material" /></svg></div>
          </nav>
          <div class="props-scroll">
            <div class="panel pp p-format">
              <div class="phead"><svg class="chev"><use href="#i-down" /></svg><span class="grow">Format</span><svg class="ic list-ic"><use href="#i-list" /></svg><svg class="grip"><use href="#i-grip" /></svg></div>
              <div class="frow"><label>Resolution X</label><div class="num n-top">1920 px</div></div>
              <div class="frow"><label>Y</label><div class="num">1080 px</div></div>
              <div class="frow"><label>%</label><div class="num n-bot n-blue">100%</div></div>
              <div class="frow g-7"><label>Aspect X</label><div class="num n-top">1.000</div></div>
              <div class="frow"><label>Y</label><div class="num n-bot">1.000</div></div>
              <div class="crow g-6"><span class="cb"></span>Render Region</div>
              <div class="crow c-dim"><span class="cb"></span>Crop to Rend...</div>
              <div class="frow g-5"><label>Frame Rate</label><div class="drop"><span class="grow">24 fps</span><svg class="chev"><use href="#i-down" /></svg></div></div>
            </div>

            <div class="panel pp p-range">
              <div class="phead"><svg class="chev"><use href="#i-down" /></svg><span class="grow">Frame Range</span><svg class="grip"><use href="#i-grip" /></svg></div>
              <div class="frow f-first"><label>Frame Start</label><div class="num n-top">0</div></div>
              <div class="frow"><label>End</label><div class="num">32</div></div>
              <div class="frow"><label>Step</label><div class="num n-bot">1</div></div>
              <div class="sub g-11"><svg class="chev"><use href="#i-right" /></svg>Time Stretching</div>
            </div>

            <div class="panel pp p-closed p-stereo">
              <div class="phead"><svg class="chev"><use href="#i-right" /></svg><span class="cb"></span><span class="grow">Stereoscopy</span><svg class="grip"><use href="#i-grip" /></svg></div>
            </div>

            <div class="panel pp p-output">
              <div class="phead"><svg class="chev"><use href="#i-down" /></svg><span class="grow">Output</span><svg class="grip"><use href="#i-grip" /></svg></div>
              <div class="path-row f-first"><div class="path">C:\Users\Ad...New Folder\1\</div><div class="path-btn"><svg class="ic"><use href="#i-folder" /></svg></div></div>
              <div class="frow g-5 r-20"><label>Saving</label><div class="check-val"><span class="cb cb-on"><svg class="chev"><use href="#i-check" /></svg></span>File Extensions</div></div>
              <div class="crow g-2"><span class="cb"></span>Cache Result</div>
              <div class="frow g-5"><label>File Format</label><div class="drop"><svg class="ic"><use href="#i-film" /></svg><span class="grow">FFmpeg Vi...</span><svg class="chev"><use href="#i-down" /></svg></div></div>
              <div class="frow g-2"><label>Color</label><div class="seg"><span>BW</span><span class="seg-on">RGB</span></div></div>
              <div class="sub g-12"><svg class="chev"><use href="#i-right" /></svg>Color Management</div>
              <div class="sub g-5"><svg class="chev"><use href="#i-right" /></svg><span class="grow">Encoding</span><svg class="ic list-ic2"><use href="#i-list" /></svg></div>
            </div>

            <div class="panel pp p-closed">
              <div class="phead"><svg class="chev"><use href="#i-right" /></svg><span class="grow">Metadata</span><svg class="grip"><use href="#i-grip" /></svg></div>
            </div>
            <div class="panel pp p-closed p-post">
              <div class="phead"><svg class="chev"><use href="#i-right" /></svg><span class="grow">Post Processing</span><svg class="grip"><use href="#i-grip" /></svg></div>
            </div>
          </div>
          <i class="props-vbar"></i>
        </div>
      </section>
    </div>
  </div>

  <footer class="status">
    <svg class="mouse"><use href="#i-mouse-l" /></svg><span class="s-text">Select</span>
    <svg class="mouse"><use href="#i-mouse-m" /></svg><span class="s-text">Rotate View</span>
    <svg class="mouse"><use href="#i-mouse-r" /></svg><span class="s-text">Object</span>
    <span class="grow"></span>
    <svg class="ic s-net"><use href="#i-net" /></svg><span class="s-ver">4.3.2</span>
  </footer>
</body>

</html>
```

FILE: styles.css
```css
* {
  box-sizing: border-box;
}

html,
body {
  margin: 0;
  height: 838px;
  overflow: hidden;
}

body {
  width: 1440px;
  background-color: #181818;
  color: #d4d4d4;
  font-family: Inter, "Noto Sans", sans-serif;
  font-size: 11.3px;
  line-height: 1;
  white-space: nowrap;
  display: flex;
  flex-direction: column;
}

.defs {
  display: none;
}

.grow {
  flex-grow: 1;
  min-width: 0;
}

/* generic icons */
.ic {
  width: 16px;
  height: 16px;
  flex-shrink: 0;
  fill: none;
  stroke: currentColor;
  stroke-width: 1.1;
}

.chev {
  width: 9px;
  height: 9px;
  flex-shrink: 0;
  fill: none;
  stroke: currentColor;
  stroke-width: 1.2;
}

.flip {
  transform: scaleX(-1);
}

.grip {
  width: 12px;
  height: 6px;
  fill: none;
  stroke: #8f8f8f;
  flex-shrink: 0;
}

/* top bar */
.topbar {
  height: 26px;
  flex-shrink: 0;
  display: flex;
  position: relative;
  color: #d8d8d8;
}

.logo {
  width: 18px;
  height: 16px;
  margin: 4px 0 0 10px;
  color: #e8e8e8;
}

.topmenu {
  display: flex;
  margin-left: 8px;
  width: 228px;
  padding-top: 7px;
  gap: 15.500px;
}

.workspaces {
  display: flex;
  width: 832px;
  margin-top: 4px;
  background-color: #1c1c1c;
  color: #9a9a9a;
  border-radius: 4px 4px 0 0;
  font-size: 11.45px;
}

.workspaces span {
  padding: 6px 10px 0;
  height: 22px;
}

.workspaces .active {
  background-color: #303030;
  color: #ececec;
  border-radius: 4px 4px 0 0;
}

.scene-sel {
  position: absolute;
  left: 1103px;
  top: 3px;
  height: 19px;
  width: 172px;
  display: flex;
  background-color: #282828;
  border-radius: 5px;
}

.layer-sel {
  left: 1280px;
  width: 152px;
}

.sel-type {
  width: 31px;
  border-radius: 5px 0 0 5px;
  display: flex;
  align-items: center;
  padding-left: 3px;
  color: #d8d8d8;
}

.sel-type .ic {
  width: 14px;
  height: 14px;
  margin-right: 3px;
}

.sel-name {
  background-color: #1d1d1d;
  display: flex;
  align-items: center;
  padding-left: 7px;
  color: #e0e0e0;
}

.scene-name {
  width: 100px;
}

.layer-name {
  width: 80px;
}

.pin {
  margin-left: auto;
  margin-right: 5px;
  color: #7a7a7a;
  width: 14px;
  height: 14px;
}

.sel-copy {
  width: 20px;
  background-color: #545454;
  display: flex;
  align-items: center;
  justify-content: center;
  color: #f0f0f0;
}

.sel-copy .ic {
  width: 14px;
  height: 14px;
}

.sel-x {
  width: 20px;
  display: flex;
  align-items: center;
  justify-content: center;
  color: #5c5c5c;
  background-color: #303030;
  border-radius: 0 5px 5px 0;
}

/* main layout */
.workspace {
  height: 788px;
  display: flex;
  gap: 3px;
}

.left-col {
  width: 1190px;
  display: flex;
  flex-direction: column;
}

.right-col {
  width: 247px;
  flex-grow: 1;
  display: flex;
  flex-direction: column;
  gap: 3px;
  height: 786px;
}

.view-row {
  height: 556px;
  display: flex;
  gap: 2px;
}

/* narrow editor at the left */
.strip {
  width: 29px;
  margin-left: 1px;
  background-color: #424242;
  border-radius: 5px;
  overflow: hidden;
  position: relative;
}

.strip-head {
  height: 25px;
  background-color: #3a3a3a;
  padding: 3px 0 0 9px;
}

.strip-btn {
  width: 30px;
  height: 19px;
  background-color: #1d1d1d;
  border-radius: 4px;
  color: #d8d8d8;
  padding: 2px 4px;
}

.strip-btn .ic {
  width: 14px;
  height: 14px;
}

.strip-tool {
  height: 26px;
  background-color: #3a3a3a;
  padding: 3px 0 0 14px;
  color: #ddd;
}

.tool-ic {
  width: 20px;
  height: 20px;
  stroke: #d08a20;
  color: #dcdcdc;
}

.strip-arrows {
  display: flex;
  justify-content: space-between;
  padding: 17px 0 0;
  color: #c8c8c8;
}

/* viewport */
.viewport {
  width: 1158px;
  position: relative;
  overflow: hidden;
  border-radius: 5px;
  background-color: #f5f5f5;
}

.scene {
  position: absolute;
  left: 0;
  top: 0;
  width: 1158px;
  height: 556px;
}

.grid-lines {
  fill: none;
  stroke: #e4e4e4;
  stroke-width: 1;
}

.axis-g {
  stroke: #d4dfcc;
}

.axis-r {
  stroke: #d3b4b4;
}

.wire {
  fill: none;
  stroke: #222;
  stroke-width: .9;
}

.view-head {
  position: relative;
  height: 27px;
  display: flex;
  align-items: center;
  padding: 0 0 2px 8px;
  background-color: #6e6e6e;
  color: #e6e6e6;
}

.hbtn {
  height: 19px;
  display: flex;
  flex-shrink: 0;
  align-items: center;
  background-color: #1d1d1d;
  border-radius: 4px;
  padding: 0 4px;
  color: #e0e0e0;
  box-shadow: 0 0 0 1px rgba(0, 0, 0, .12);
}

.hbtn .ic {
  width: 14px;
  height: 14px;
}

.hbtn .grow {
  padding-left: 6px;
}

.hbtn .chev {
  margin-left: auto;
}

.b-type {
  width: 32px;
  padding-left: 6px;
}

.b-mode {
  width: 110px;
  margin-left: 6px;
  padding-left: 5px;
}

.menus {
  display: flex;
  flex-shrink: 0;
  gap: 14px;
  padding-left: 12px;
}

.view-menus {
  width: 298px;
  padding-left: 11px;
  gap: 15px;
}

.dope-menus {
  width: 809px;
  padding-top: 1px;
}

.tl-menus {
  width: 328px;
  padding-top: 2px;
}

.menu {
  color: #e4e4e4;
}

.b-global {
  width: 76px;
}

.b-global .grow {
  padding-left: 8px;
}

.b-pivot {
  width: 31px;
  margin-left: 7px;
}

.hgroup {
  height: 19px;
  display: flex;
  flex-shrink: 0;
  border-radius: 4px;
  overflow: hidden;
  box-shadow: 0 0 0 1px rgba(0, 0, 0, .12);
}

.gcell {
  flex: 1;
  min-width: 0;
  background-color: #545454;
  color: #e4e4e4;
  display: flex;
  align-items: center;
  justify-content: center;
  border-left: 1px solid rgba(0, 0, 0, .22);
}

.gcell:first-child {
  border-left: 0;
}

.gcell .ic {
  width: 14px;
  height: 14px;
}

.gcell.wide {
  flex: 1.600;
  gap: 2px;
}

.gcell.on-grey {
  background-color: #595959;
}

.gcell.dark {
  background-color: #1d1d1d;
}

.gcell.dim {
  background-color: #4b4b4b;
  color: #777;
}

.gcell.blue {
  background-color: #4772b3;
  color: #fff;
}

.gcell.blue-dim {
  background-color: #4b6a97;
  color: #5a7cb2;
}

.b-snap {
  width: 52px;
  margin-left: 5px;
}

.b-prop {
  width: 51px;
  margin-left: 5px;
}

.b-vis {
  width: 31px;
  margin-left: 196px;
}

.b-gizmo {
  width: 38px;
  margin-left: 6px;
}

.b-overlay {
  width: 39px;
  margin-left: 6px;
}

.b-xray {
  width: 18px;
  margin-left: 7px;
}

.b-shade {
  width: 96px;
  margin-left: 6px;
}

.b-shade .gcell:last-child {
  flex: 1.500;
}

.b-pause {
  width: 20px;
  margin-left: 6px;
}

.pause {
  gap: 3px;
}

.pause i {
  width: 3px;
  height: 11px;
  background-color: #e4e4e4;
}

.view-sub {
  position: relative;
  display: flex;
  justify-content: space-between;
  height: 24px;
}

.tool-set {
  width: 147px;
  background-color: #6e6e6e;
  border-radius: 0 0 5px 0;
  display: flex;
  align-items: flex-start;
  padding-left: 14px;
  color: #d0d0d0;
}

.tool-set .tool-ic {
  margin-top: 1px;
}

.b-selmode {
  width: 96px;
  margin-left: 10px;
  height: 19px;
  margin-top: 1px;
}

.b-selmode .ic {
  width: 15px;
  height: 15px;
}

.options-tab {
  width: 82px;
  background-color: #6e6e6e;
  border-radius: 0 0 0 5px;
  padding: 2px 8px 0 9px;
}

.b-options .grow {
  padding-left: 3px;
}

.b-options {
  padding-right: 3px;
}

.view-text {
  position: absolute;
  left: 9px;
  top: 60px;
  font-size: 11px;
  line-height: 17.500px;
  color: #dedede;
  text-shadow: 0 0 1px #222, 0 0 1px #222, 0 0 1px #444;
}

.edge-tab {
  position: absolute;
  top: 67px;
  width: 7px;
  height: 12px;
  background-color: #c9c9c9;
}

.edge-l {
  left: 0;
  border-radius: 0 3px 3px 0;
}

.edge-r {
  right: 0;
  border-radius: 3px 0 0 3px;
}

.nav-gizmo {
  position: absolute;
  left: 1058px;
  top: 54px;
  width: 100px;
  height: 210px;
}

.giz-label {
  font-size: 12px;
  font-weight: 700;
  text-anchor: middle;
  fill: #1a1a1a;
}

.redo-panel {
  position: absolute;
  left: 4px;
  top: 385px;
  width: 280px;
  height: 167px;
  background-color: #181818;
  border-radius: 4px;
  padding-top: 7px;
  color: #aaa;
}

.redo-head {
  height: 14px;
  display: flex;
  align-items: center;
  gap: 5px;
  padding-left: 8px;
  margin-bottom: 12px;
  color: #b0b0b0;
}

.redo-row {
  display: flex;
  align-items: center;
  height: 19px;
  margin-bottom: 1px;
  color: #ababab;
}

.redo-row label {
  width: 108px;
  text-align: right;
  margin-right: 10px;
  padding-top: 2px;
}

.redo-fld {
  width: 153px;
  height: 19px;
  padding-top: 2px;
  background-color: #545454;
  color: #e6e6e6;
  display: flex;
  align-items: center;
  justify-content: center;
}

.f-top {
  border-radius: 4px 4px 0 0;
}

.f-bot {
  border-radius: 0 0 4px 4px;
}

.r-orient {
  margin-top: 3px;
}

.redo-drop {
  width: 154px;
  height: 19px;
  display: flex;
  align-items: center;
  padding: 1px 6px 0 4px;
  background-color: #1d1d1d;
  border: 1px solid #3d3d3d;
  border-radius: 4px;
  color: #e0e0e0;
}

.redo-drop .ic {
  width: 15px;
  height: 15px;
}

.redo-drop .grow {
  padding-left: 6px;
}

.r-check {
  height: 16px;
  margin: 5px 0 0;
  color: #929292;
}

.r-last {
  margin-top: 6px;
}

.cb {
  width: 13px;
  height: 13px;
  background-color: #545454;
  border-radius: 3px;
  margin-right: 4px;
  flex-shrink: 0;
  display: inline-flex;
  align-items: center;
  justify-content: center;
  box-shadow: 0 1px 0 rgba(0, 0, 0, .2);
}

.cb-on {
  background-color: #4772b3;
  color: #fff;
}

/* dope sheet */
.dope {
  margin-top: 4px;
  height: 200px;
  background-color: #2b2b2b;
  border-radius: 5px;
  overflow: hidden;
  display: flex;
  flex-direction: column;
}

.ed-head {
  height: 26px;
  flex-shrink: 0;
  background-color: #303030;
  display: flex;
  align-items: center;
  padding-left: 9px;
}

.dbtn {
  height: 19px;
  display: flex;
  flex-shrink: 0;
  align-items: center;
  background-color: #282828;
  border: 1px solid #3f3f3f;
  border-radius: 4px;
  color: #dcdcdc;
  padding: 0 4px;
}

.dbtn .ic {
  width: 14px;
  height: 14px;
}

.dbtn .chev {
  margin-left: auto;
}

.d-type {
  width: 30px;
}

.d-mode {
  width: 129px;
  margin-left: 7px;
}

.d-mode .grow {
  padding-left: 8px;
}

.d-sel {
  width: 58px;
}

.d-filter {
  width: 32px;
  margin-left: 6px;
}

.d-snap {
  width: 38px;
  margin-left: 6px;
}

.d-prop {
  width: 52px;
  margin-left: 6px;
}

.dope-body {
  height: 174px;
  display: flex;
}

.channels {
  width: 200px;
  flex-shrink: 0;
  background-color: #1d1d1d;
}

.ch-search {
  display: flex;
  padding: 2px 3px 0;
  height: 23px;
  margin-bottom: 0;
}

.ch-field {
  width: 173px;
  height: 18px;
  background-color: #1d1d1d;
  border: 1px solid #3a3a3a;
  border-radius: 4px 0 0 4px;
  display: flex;
  align-items: center;
  gap: 8px;
  padding-left: 2px;
  color: #6e6e6e;
}

.ch-field .ic {
  width: 14px;
  height: 14px;
  color: #c8c8c8;
}

.ch-swap {
  width: 21px;
  height: 18px;
  background-color: #545454;
  border-radius: 0 4px 4px 0;
  display: flex;
  align-items: center;
  justify-content: center;
  color: #e0e0e0;
}

.ch {
  display: flex;
  align-items: center;
  height: 16px;
  margin-bottom: 2px;
  gap: 3px;
  color: #c0c0c0;
}

.ch .ic {
  width: 14px;
  height: 14px;
}

.ch-summary {
  height: 18px;
  margin-bottom: 1px;
  background-color: #4d2a2a;
  margin-left: 2px;
  padding-left: 3px;
  border-radius: 4px 0 0 4px;
  gap: 6px;
  color: #b4b4b4;
}

.ch-object {
  background-color: #1a4f82;
  margin-left: 1px;
  padding-left: 4px;
  border-radius: 4px 0 0 4px;
  gap: 4px;
}

.ic-mesh {
  color: #c8c8c8;
}

.sel-name-text {
  color: #f2a330;
}

.ch-action {
  background-color: #12355a;
  margin-left: 7px;
  padding-left: 4px;
  border-radius: 4px 0 0 4px;
  gap: 4px;
}

.ch-action .ic {
  width: 16px;
  height: 16px;
}

.ch-group {
  background-color: #233f35;
  margin-left: 14px;
  padding: 0 2px 0 4px;
  border-radius: 8px 0 0 8px;
  margin-bottom: 0;
  gap: 2px;
}

.ch-group > .chev {
  margin-right: 3px;
}

.ch-group .sel-name-text {
  margin-left: 2px;
}

.ch-group .ic-dim {
  width: 15px;
  height: 15px;
}

.ic-dim {
  color: #9aa89f;
}

.ch .ic-small {
  width: 13px;
  height: 13px;
}

.ic-white {
  color: #fff;
  margin-right: 2px;
}

.mini-check {
  width: 11px;
  height: 11px;
  background-color: #d8d8d8;
  color: #333;
  border-radius: 2px;
  display: inline-flex;
  align-items: center;
  justify-content: center;
  flex-shrink: 0;
}

.ch-group .mini-check {
  margin-right: 2px;
}

.keys {
  width: 710px;
  height: 174px;
  flex-shrink: 0;
}

.grid-minor {
  fill: none;
  stroke: #000;
  stroke-opacity: .14;
}

.grid-major {
  fill: none;
  stroke: #000;
  stroke-opacity: .32;
}

.kf circle {
  fill: #cfcfcf;
  stroke: #111;
  stroke-width: 1.300;
}

.kf .kf-on {
  fill: #ffb72d;
}

.ruler text {
  font-size: 11.3px;
  text-anchor: middle;
  fill: #a4a4a4;
}

.cur-frame {
  font-size: 11.3px;
  text-anchor: middle;
  fill: #fff;
  font-weight: 600;
}

.marker-on {
  font-size: 11.3px;
  fill: #e8e8e8;
}

.marker-off {
  font-size: 11.3px;
  fill: #8a8a8a;
}

.ds-side {
  width: 280px;
  flex-shrink: 0;
  background-color: #2b2b2b;
  padding: 0 8px;
}

.panel {
  background-color: #3d3d3d;
  border-radius: 5px;
}

.phead {
  height: 26px;
  display: flex;
  align-items: center;
  gap: 4px;
  padding: 0 10px 0 9px;
  color: #e0e0e0;
}

.action-panel {
  height: 133px;
  margin-bottom: 2px;
  width: 264px;
}

.action-panel .phead {
  padding-top: 2px;
}

.closed-panel {
  width: 264px;
  height: 25px;
}

.closed-panel .phead {
  height: 25px;
  padding-top: 3px;
}

.act-name {
  display: flex;
  align-items: center;
  gap: 9px;
  height: 18px;
  margin-top: 9px;
  padding: 2px 0 0 10px;
  color: #cfcfcf;
}

.act-check {
  display: flex;
  align-items: center;
  height: 16px;
  margin-top: 8px;
  padding: 1px 0 0 9px;
  color: #d4d4d4;
}

.act-dim {
  margin-top: 5px;
  color: #7c7c7c;
}

.act-dim .cb {
  background-color: #4a4a4a;
}

.act-range {
  display: flex;
  width: 246px;
  height: 18px;
  margin: 8px 0 0 9px;
  gap: 1px;
  color: #858585;
}

.act-cell {
  flex: 1;
  display: flex;
  justify-content: space-between;
  align-items: center;
  background-color: #4a4a4a;
  padding: 1px 13px 0 15px;
}

.act-cell:first-child {
  border-radius: 4px 0 0 4px;
}

.act-cell:last-child {
  border-radius: 0 4px 4px 0;
}

/* timeline */
.timeline {
  margin-top: 3px;
  height: 23px;
  background-color: #303030;
  border-radius: 5px;
  display: flex;
  align-items: center;
  padding-left: 9px;
}

.tl-pop {
  display: flex;
  flex-shrink: 0;
  height: 19px;
  margin-left: 7px;
  border: 1px solid #3f3f3f;
  border-radius: 4px;
  background-color: #282828;
}

.tl-pop-cell {
  display: flex;
  align-items: center;
  justify-content: space-between;
  padding: 2px 4px 0 7px;
  color: #dcdcdc;
}

.tl-pop-cell .chev {
  margin-top: -2px;
}

.c-play {
  width: 70px;
  border-right: 1px solid #3f3f3f;
}

.c-key {
  width: 59px;
}

.t-rec {
  width: 35px;
}

.t-rec .gcell:first-child {
  color: #aaa;
}

.t-trans {
  width: 119px;
  margin-left: 8px;
}

.t-trans .ic {
  width: 13px;
  height: 13px;
}

.t-frame {
  width: 73px;
  height: 18px;
  flex-shrink: 0;
  margin-left: 241px;
  background-color: #545454;
  border-radius: 4px;
  display: flex;
  align-items: center;
  justify-content: center;
  color: #e0e0e0;
}

.t-watch {
  width: 19px;
  margin-left: 7px;
  display: flex;
  flex-shrink: 0;
  color: #d8d8d8;
}

.t-range {
  display: flex;
  flex-shrink: 0;
  width: 175px;
  height: 18px;
  gap: 1px;
}

.t-cell {
  flex: 1;
  background-color: #545454;
  display: flex;
  justify-content: space-between;
  align-items: center;
  padding: 0 14px 0 14px;
  color: #e0e0e0;
}

.t-cell:first-child {
  border-radius: 4px 0 0 4px;
}

.t-cell:last-child {
  border-radius: 0 4px 4px 0;
}

/* outliner */
.outliner {
  height: 136px;
  background-color: #282828;
  border-radius: 5px 0 0 5px;
  overflow: hidden;
}

.out-head {
  height: 27px;
  display: flex;
  align-items: center;
  padding-left: 7px;
  flex-shrink: 0;
}

.o-type {
  width: 32px;
  margin-top: -1px;
}

.o-mode {
  width: 32px;
  margin-left: 5px;
  margin-top: -1px;
}

.search {
  height: 20px;
  display: flex;
  flex-shrink: 0;
  align-items: center;
  gap: 8px;
  background-color: #1d1d1d;
  border: 1px solid #3a3a3a;
  border-radius: 4px;
  padding-left: 3px;
  color: #6a6a6a;
}

.search .ic {
  width: 14px;
  height: 14px;
  color: #c8c8c8;
}

.o-search {
  width: 119px;
  margin-left: 17px;
  margin-top: -1px;
}

.o-filter {
  width: 24px;
  margin-left: 17px;
  margin-top: -1px;
  border-radius: 4px 0 0 4px;
}

.out-rows {
  position: relative;
}

.tree-line {
  position: absolute;
  left: 28px;
  top: 44px;
  width: 1px;
  height: 65px;
  background-color: #5a5a5a;
}

.orow {
  height: 20px;
  display: flex;
  align-items: center;
  padding-top: 1px;
  color: #c8c8c8;
  padding-right: 13px;
}

.orow.odd {
  background-color: #2b2b2b;
}

.orow .ic {
  width: 14px;
  height: 14px;
}

.o-l0 {
  padding-left: 22px;
}

.ic-box {
  margin-right: 7px;
  color: #d8d8d8;
}

.o-l1 {
  padding-left: 25px;
}

.o-l1 > .chev {
  margin-right: 6px;
}

.coll-chip {
  width: 17px;
  height: 17px;
  background-color: #4a4a4a;
  border: 1px solid #6a6a6a;
  border-radius: 4px;
  display: flex;
  align-items: center;
  justify-content: center;
  margin-right: 6px;
  color: #d8d8d8;
}

.coll-chip .ic {
  width: 13px;
  height: 13px;
}

.o-l2 {
  padding-left: 45px;
}

.o-l2 > .chev {
  margin-right: 2px;
}

.orow .c-orange,
.orow .c-brown {
  width: 15px;
  height: 15px;
  margin-right: 12px;
}

.c-orange {
  color: #e08a3e;
}

.c-brown {
  color: #80523a;
}

.c-red {
  color: #8a3d3d;
}

.faded {
  color: #7a7a7a;
}

.orow .rel {
  color: #c8c8c8;
  margin-right: -3px;
}

.cam-chip {
  width: 13px;
  height: 17px;
  background-color: #3a3a3a;
  border-radius: 4px 0 0 4px;
  border: 1px solid #5a5a5a;
  border-right: 0;
  color: #17c080;
  margin-right: 18px;
  overflow: hidden;
  flex-shrink: 0;
}

.orow .rest {
  margin-left: 6px;
  color: #dedede;
}

.orow .mini-check + .rest {
  margin-left: 7px;
}

.orow.faded .rest {
  color: #bcbcbc;
}

.orow.faded .norm {
  color: #dedede;
}

.e-name {
  width: 57px;
}

.e-wide {
  width: 81px;
}

.out-hbar {
  position: absolute;
  left: 7px;
  top: 104px;
  width: 188px;
  height: 4px;
  background-color: #3a3a3a;
  border-radius: 2px;
}

.out-vbar {
  position: absolute;
  right: 3px;
  top: 7px;
  width: 3px;
  height: 36px;
  background-color: #3f3f3f;
  border-radius: 2px;
}

/* properties */
.props {
  height: 647px;
  display: flex;
  flex-direction: column;
  background-color: #2b2b2b;
  border-radius: 5px 0 0 5px;
  overflow: hidden;
}

.props-head {
  height: 25px;
  flex-shrink: 0;
  background-color: #2e2e2e;
  display: flex;
  align-items: center;
  padding-left: 7px;
  position: relative;
  z-index: 1;
}

.p-search {
  width: 117px;
  margin-left: 28px;
  height: 19px;
}

.p-drop {
  width: 19px;
  margin-left: 36px;
  justify-content: center;
}

.p-drop .chev {
  margin: 0;
}

.props-body {
  display: flex;
  height: 622px;
  position: relative;
}

.props-vbar {
  position: absolute;
  right: 2px;
  top: 55px;
  width: 2px;
  height: 480px;
  background-color: #3f3f3f;
}

.tabs {
  width: 27px;
  flex-shrink: 0;
  background-color: #1f1f1f;
  padding-top: 7px;
  color: #c8c8c8;
}

.tab {
  height: 28px;
  display: flex;
  align-items: center;
  justify-content: center;
  margin-left: 1px;
  border-radius: 4px 0 0 4px;
}

.tab.active {
  background-color: #3d3d3d;
}

.tab .ic {
  width: 15px;
  height: 15px;
}

.gap-8 {
  margin-top: 8px;
}

.gap-7 {
  margin-top: 7px;
}

.gap-9 {
  margin-top: 9px;
}

.tc-world {
  color: #b25a5a;
}

.tc-orange {
  color: #d98a4b;
}

.tc-blue {
  color: #5b8fd8;
}

.tc-green {
  color: #17c080;
}

.props-scroll {
  flex-grow: 1;
  padding: 0 8px;
  display: flex;
  flex-direction: column;
  gap: 2px;
}

.pp {
  flex-shrink: 0;
}

.p-format {
  margin-top: -9px;
  height: 215px;
  margin-bottom: 1px;
  padding-bottom: 8px;
}

.p-range {
  height: 126px;
}

.p-closed {
  height: 25px;
}

.p-closed .phead {
  height: 25px;
}

.p-post {
  margin-top: 0;
}

.p-stereo .cb {
  margin: 0 0 0 -1px;
}

.p-output {
  height: 205px;
}

.list-ic {
  width: 14px;
  height: 14px;
  color: #b8b8b8;
  margin-right: 9px;
}

.list-ic2 {
  width: 14px;
  height: 14px;
  color: #d0d0d0;
  margin-right: 27px;
}

.frow {
  display: flex;
  height: 19px;
  margin-bottom: 1px;
  padding-left: 9px;
  align-items: center;
  color: #c8c8c8;
}

.frow label {
  width: 70px;
  margin-right: 10px;
  text-align: right;
}

.p-format .phead + .frow {
  margin-top: 7px;
}

.f-first {
  margin-top: 8px;
}

.num {
  width: 106px;
  height: 19px;
  display: flex;
  align-items: center;
  justify-content: center;
  background-color: #545454;
  color: #e0e0e0;
}

.n-top {
  border-radius: 4px 4px 0 0;
}

.n-bot {
  border-radius: 0 0 4px 4px;
}

.n-blue {
  background-color: #4772b3;
  color: #f0f0f0;
}

.g-7 {
  margin-top: 6px;
}

.g-5 {
  margin-top: 5px;
}

.g-6 {
  margin-top: 6px;
}

.g-2 {
  margin-top: 2px;
}

.g-11 {
  margin-top: 11px;
}

.g-12 {
  margin-top: 12px;
}

.r-20 {
  height: 20px;
  margin-bottom: 0;
}

.crow {
  display: flex;
  align-items: center;
  height: 20px;
  padding-left: 89px;
  color: #c8c8c8;
}

.c-dim {
  color: #7c7c7c;
}

.c-dim .cb {
  background-color: #4a4a4a;
}

.check-val {
  display: flex;
  align-items: center;
  color: #e0e0e0;
}

.drop {
  width: 106px;
  height: 19px;
  display: flex;
  align-items: center;
  background-color: #1d1d1d;
  border-radius: 4px;
  padding: 0 6px 0 7px;
  color: #e0e0e0;
}

.drop .ic {
  width: 15px;
  height: 15px;
  margin: 0 7px 0 -3px;
}

.sub {
  display: flex;
  align-items: center;
  height: 20px;
  padding-left: 23px;
  gap: 5px;
  color: #d4d4d4;
}

.path-row {
  display: flex;
  height: 19px;
  margin-left: 9px;
  width: 186px;
  margin-bottom: 0;
}

.path {
  width: 166px;
  background-color: #1d1d1d;
  border-radius: 4px 0 0 4px;
  display: flex;
  align-items: center;
  padding-left: 7px;
  color: #e0e0e0;
}

.path-btn {
  width: 20px;
  background-color: #545454;
  border-radius: 0 4px 4px 0;
  display: flex;
  align-items: center;
  justify-content: center;
  color: #e8e8e8;
}

.seg {
  width: 106px;
  height: 19px;
  display: flex;
  border-radius: 4px;
  overflow: hidden;
  color: #e0e0e0;
}

.seg span {
  flex: 1;
  display: flex;
  align-items: center;
  justify-content: center;
  background-color: #545454;
}

.seg .seg-on {
  background-color: #4772b3;
  color: #fff;
}

/* status bar */
.status {
  height: 24px;
  flex-shrink: 0;
  display: flex;
  align-items: center;
  padding: 0 0 2px 10px;
  color: #9a9a9a;
  font-size: 11px;
}

.mouse {
  width: 12px;
  height: 16px;
  flex-shrink: 0;
  fill: none;
  stroke: #b8b8b8;
  color: #b8b8b8;
  stroke-width: 1;
}

.s-text {
  margin: 0 10px 0 4px;
}

.s-net {
  color: #6a6a6a;
  margin-right: 12px;
}

.s-ver {
  color: #8a8a8a;
  border-left: 1px solid #5a5a5a;
  padding-left: 3px;
  margin-right: 12px;
}
```
